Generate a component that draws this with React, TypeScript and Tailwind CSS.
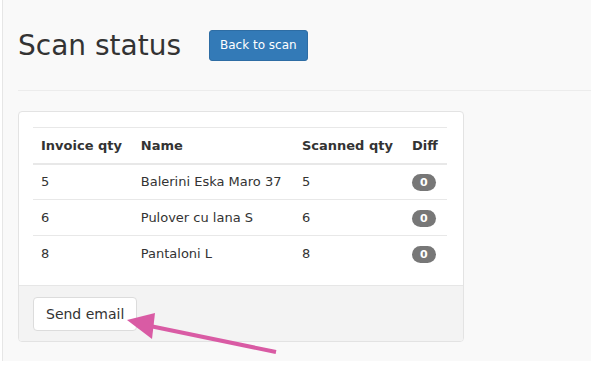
import React from "react";

const rows = [
  { inv: "5", name: "Balerini Eska Maro 37", scanned: "5", diff: "0" },
  { inv: "6", name: "Pulover cu lana S", scanned: "6", diff: "0" },
  { inv: "8", name: "Pantaloni L", scanned: "8", diff: "0" },
];

export default function App() {
  return (
    <div
      className="w-[591px] h-[383px] bg-white pl-[2px] overflow-hidden relative"
      style={{ fontFamily: '"DejaVu Sans", sans-serif' }}
    >
      <div className="h-[361px] border-l border-[#e6e6e6] bg-[#f9f9f9] pl-[15px] text-[#333]">
        <div className="flex items-center pt-[30px] pb-[29px]">
          <h1 className="text-[28px] leading-[31px] font-normal m-0 text-[#333]">Scan status</h1>
          <button className="ml-[28px] bg-[#337ab7] text-white text-[12px] leading-[17px] px-[10px] py-[6px] rounded-[3px] border border-[#2e6da4]">
            Back to scan
          </button>
        </div>
        <div className="h-px bg-[#ececec] mr-0" />
        <div className="mt-[20px] w-[446px] bg-white border border-[#e3e3e3] rounded-[4px] overflow-hidden">
          <div className="pl-[14px] pr-[16px] pt-[15px] pb-[13px]">
            <table className="w-full text-[13px] border-collapse">
              <thead>
                <tr className="border-t border-[#e8e8e8] border-b-2">
                  <th className="text-left font-bold px-[8px] h-[36px] align-middle">Invoice qty</th>
                  <th className="text-left font-bold px-[8px] align-middle">Name</th>
                  <th className="text-left font-bold px-[8px] align-middle">Scanned qty</th>
                  <th className="text-left font-bold px-[8px] align-middle">Diff</th>
                </tr>
              </thead>
              <tbody>
                {rows.map((r, i) => (
                  <tr key={i} className={i === 0 ? "border-t-2 border-[#e8e8e8]" : "border-t border-[#e8e8e8]"}>
                    <td className="px-[8px] h-[36px] align-middle">{r.inv}</td>
                    <td className="px-[8px] align-middle">{r.name}</td>
                    <td className="px-[8px] align-middle">{r.scanned}</td>
                    <td className="px-[8px] align-middle">
                      <span className="inline-block bg-[#777] text-white text-[11px] font-bold leading-[17px] px-[8px] rounded-[9px]">
                        {r.diff}
                      </span>
                    </td>
                  </tr>
                ))}
              </tbody>
            </table>
          </div>
          <div className="bg-[#f3f3f3] border-t border-[#e6e6e6] px-[14px] pt-[11px] pb-[10px]">
            <button className="bg-white border border-[#dcdcdc] rounded-[4px] text-[14px] leading-[20px] px-[12px] py-[6px] text-[#333]">
              Send email
            </button>
          </div>
        </div>
      </div>
      <svg className="absolute left-0 top-0" width="591" height="383" viewBox="0 0 591 383">
        <line x1="276" y1="352" x2="150" y2="326" stroke="#d95ba4" strokeWidth="4" strokeLinecap="butt" />
        <polygon points="127,320 155,313 152,339" fill="#d95ba4" />
      </svg>
    </div>
  );
}
